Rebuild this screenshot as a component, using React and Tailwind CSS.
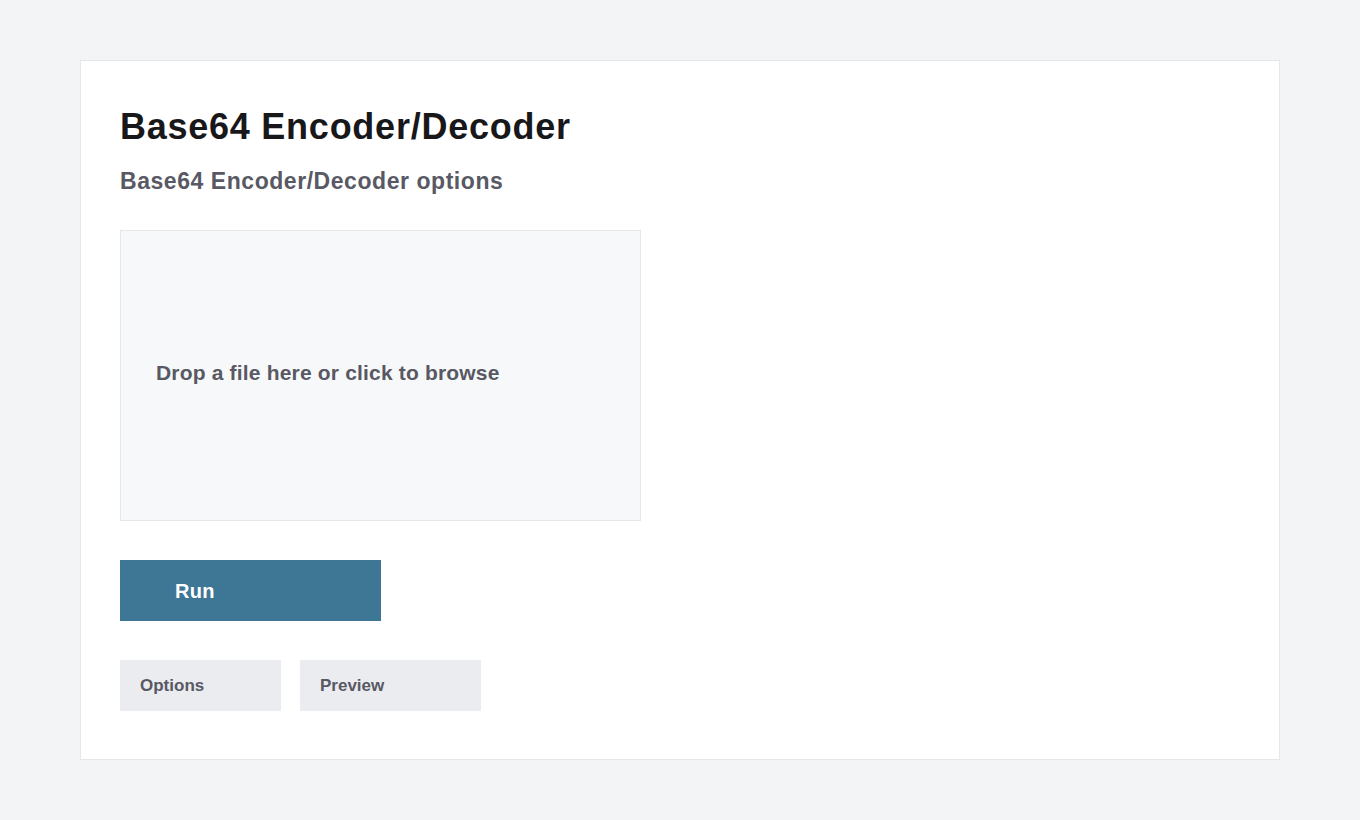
export default function App() {
  return (
    <div className="min-h-screen bg-[#f3f4f6] pt-[60px] pb-[60px]" style={{ fontFamily: '"Liberation Sans", Arial, sans-serif' }}>
      <div className="mx-auto w-[1200px] h-[700px] bg-white border border-[#e5e7eb] px-[39px] pt-[39px]">
        <h1 className="text-[36px] leading-[54px] font-bold text-[#18181b] tracking-[0.75px]">Base64 Encoder/Decoder</h1>
        <h2 className="mt-[14px] text-[23px] leading-[26px] font-bold text-[#585964] tracking-[0.55px]">Base64 Encoder/Decoder options</h2>
        <div className="mt-[36px] w-[521px] h-[291px] bg-[#f7f8f9] border border-[#e5e7eb] flex items-center pl-[35px]">
          <span className="text-[21px] font-bold text-[#585964] tracking-[0.18px] mb-[6px]">Drop a file here or click to browse</span>
        </div>
        <button className="mt-[39px] w-[261px] h-[61px] bg-[#3e7696] text-white text-[20px] font-bold flex items-center pl-[55px] tracking-[0.3px]">Run</button>
        <div className="mt-[39px] flex gap-[19px]">
          <div className="w-[161px] h-[51px] bg-[#ebecf0] flex items-center pl-[20px] pt-[1px] text-[17px] font-bold text-[#585964]">Options</div>
          <div className="w-[181px] h-[51px] bg-[#ebecf0] flex items-center pl-[20px] pt-[1px] text-[17px] font-bold text-[#585964]">Preview</div>
        </div>
      </div>
    </div>
  );
}
